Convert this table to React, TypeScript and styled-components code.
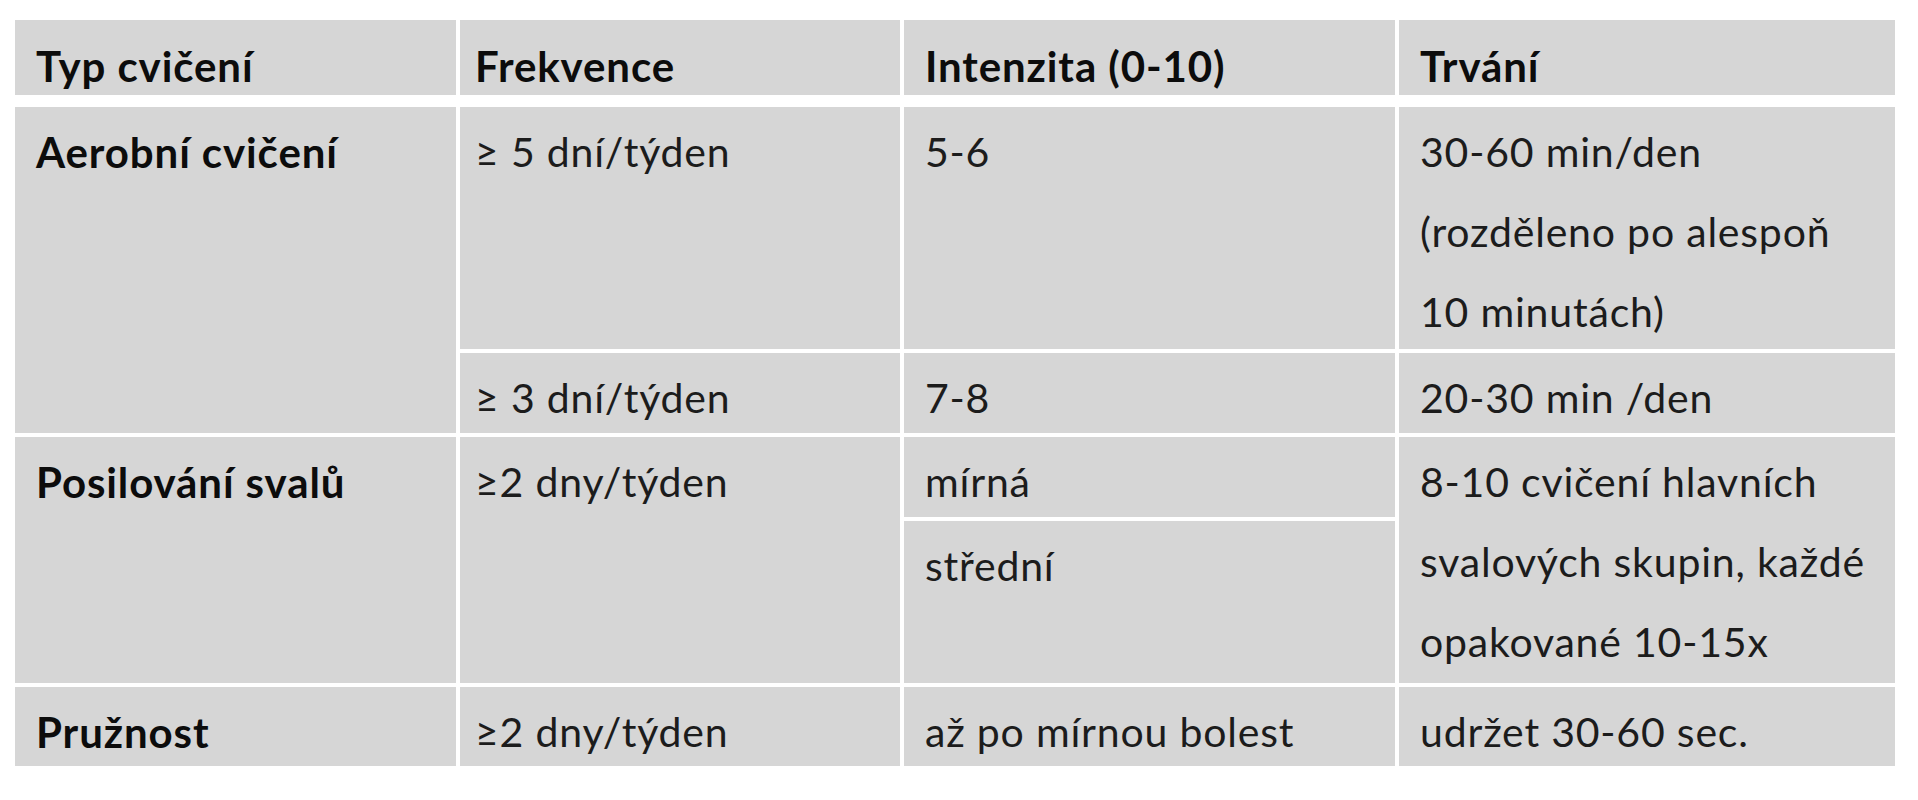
import styled, { createGlobalStyle } from "styled-components";

const GlobalStyle = createGlobalStyle`
  html, body {
    margin: 0;
    background: #ffffff;
  }
  body {
    font-family: Lato, "Open Sans", "DejaVu Sans", sans-serif;
  }
`;

const COLUMNS = "441px 440px 491px 496px";

// column 2 text sits a little closer to its left border than the others
const padLeft = (col: number) => (col === 2 ? 15 : 21);

const Page = styled.main`
  padding: 20px 0 0 15px;
`;

const Table = styled.div`
  width: 1880px;
  display: flex;
  flex-direction: column;
  gap: 12px;
`;

const HeaderRow = styled.div`
  display: grid;
  grid-template-columns: ${COLUMNS};
  grid-template-rows: 75px;
  column-gap: 4px;
`;

const HeadCell = styled.div<{ $col: number }>`
  background: #d6d6d6;
  padding: 9px 10px 0 ${(p) => padLeft(p.$col)}px;
  font-size: 42px;
  font-weight: 700;
  letter-spacing: 0.9px;
  line-height: 75px;
  color: #0c0c0c;
  white-space: nowrap;
  overflow: hidden;
`;

const Body = styled.div`
  display: grid;
  grid-template-columns: ${COLUMNS};
  grid-template-rows: 242px 80px 80px 162px 79px;
  gap: 4px;
`;

const Cell = styled.div<{ $col: number; $row: number; $span?: number; $bold?: boolean }>`
  grid-column: ${(p) => p.$col};
  grid-row: ${(p) => p.$row} / span ${(p) => p.$span ?? 1};
  background: #d6d6d6;
  padding: 5px 10px 0 ${(p) => padLeft(p.$col)}px;
  font-size: ${(p) => (p.$bold ? 42 : 41)}px;
  font-weight: ${(p) => (p.$bold ? 700 : 400)};
  letter-spacing: ${(p) => (p.$bold ? 0.9 : 0.8)}px;
  line-height: 80px;
  color: ${(p) => (p.$bold ? "#0c0c0c" : "#1c1c1c")};
  white-space: pre;
  overflow: hidden;
`;

const headers = ["Typ cvičení", "Frekvence", "Intenzita (0-10)", "Trvání"];

export default function App() {
  return (
    <Page>
      <GlobalStyle />
      <Table>
        <HeaderRow>
          {headers.map((h, i) => (
            <HeadCell key={h} $col={i + 1}>
              {h}
            </HeadCell>
          ))}
        </HeaderRow>
        <Body>
          <Cell $col={1} $row={1} $span={2} $bold>
            Aerobní cvičení
          </Cell>
          <Cell $col={2} $row={1}>≥ 5 dní/týden</Cell>
          <Cell $col={3} $row={1}>5-6</Cell>
          <Cell $col={4} $row={1}>
            {"30-60 min/den\n(rozděleno po alespoň\n10 minutách)"}
          </Cell>

          <Cell $col={2} $row={2}>≥ 3 dní/týden</Cell>
          <Cell $col={3} $row={2}>7-8</Cell>
          <Cell $col={4} $row={2}>20-30 min /den</Cell>

          <Cell $col={1} $row={3} $span={2} $bold>
            Posilování svalů
          </Cell>
          <Cell $col={2} $row={3} $span={2}>≥2 dny/týden</Cell>
          <Cell $col={3} $row={3}>mírná</Cell>
          <Cell $col={3} $row={4}>střední</Cell>
          <Cell $col={4} $row={3} $span={2}>
            {"8-10 cvičení hlavních\nsvalových skupin, každé\nopakované 10-15x"}
          </Cell>

          <Cell $col={1} $row={5} $bold>
            Pružnost
          </Cell>
          <Cell $col={2} $row={5}>≥2 dny/týden</Cell>
          <Cell $col={3} $row={5}>až po mírnou bolest</Cell>
          <Cell $col={4} $row={5}>udržet 30-60 sec.</Cell>
        </Body>
      </Table>
    </Page>
  );
}
